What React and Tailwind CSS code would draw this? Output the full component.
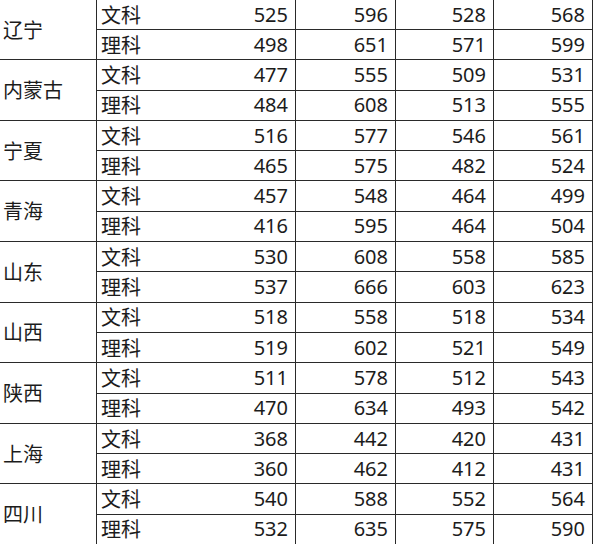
import React from 'react';

const rows = [
    { name: '辽宁', wen: [525, 596, 528, 568], li: [498, 651, 571, 599] },
    { name: '内蒙古', wen: [477, 555, 509, 531], li: [484, 608, 513, 555] },
    { name: '宁夏', wen: [516, 577, 546, 561], li: [465, 575, 482, 524] },
    { name: '青海', wen: [457, 548, 464, 499], li: [416, 595, 464, 504] },
    { name: '山东', wen: [530, 608, 558, 585], li: [537, 666, 603, 623] },
    { name: '山西', wen: [518, 558, 518, 534], li: [519, 602, 521, 549] },
    { name: '陕西', wen: [511, 578, 512, 543], li: [470, 634, 493, 542] },
    { name: '上海', wen: [368, 442, 420, 431], li: [360, 462, 412, 431] },
    { name: '四川', wen: [540, 588, 552, 564], li: [532, 635, 575, 590] },
];

const cjk = "font-['Noto_Sans_CJK_SC',sans-serif]";
const num = "font-['Noto_Sans','Liberation_Sans',sans-serif]";

function ScoreCells({ type, scores }) {
    return (
        <>
            <div className={`${cjk} flex items-center pl-[4px] text-[20px] border-b border-[#2a2a2a]`}>{type}</div>
            {scores.map((s, i) => (
                <div
                    key={i}
                    className={`${num} flex items-center justify-end pr-[7px] text-[20px] border-b border-r border-[#2a2a2a]`}
                >
                    {s}
                </div>
            ))}
        </>
    );
}

export default function App() {
    return (
        <div className="w-[593px] h-[544px] overflow-hidden bg-white text-[#1c1c1c]">
            <div className="grid grid-cols-[97px_60px_139px_100px_98px_99px] grid-rows-[30px_repeat(17,30.3px)] leading-none">
                {rows.map((r) => (
                    <React.Fragment key={r.name}>
                        <div className={`${cjk} row-span-2 flex items-center pl-[3px] text-[20px] border-r border-b border-[#2a2a2a]`}>
                            {r.name}
                        </div>
                        <ScoreCells type="文科" scores={r.wen} />
                        <ScoreCells type="理科" scores={r.li} />
                    </React.Fragment>
                ))}
            </div>
        </div>
    );
}
